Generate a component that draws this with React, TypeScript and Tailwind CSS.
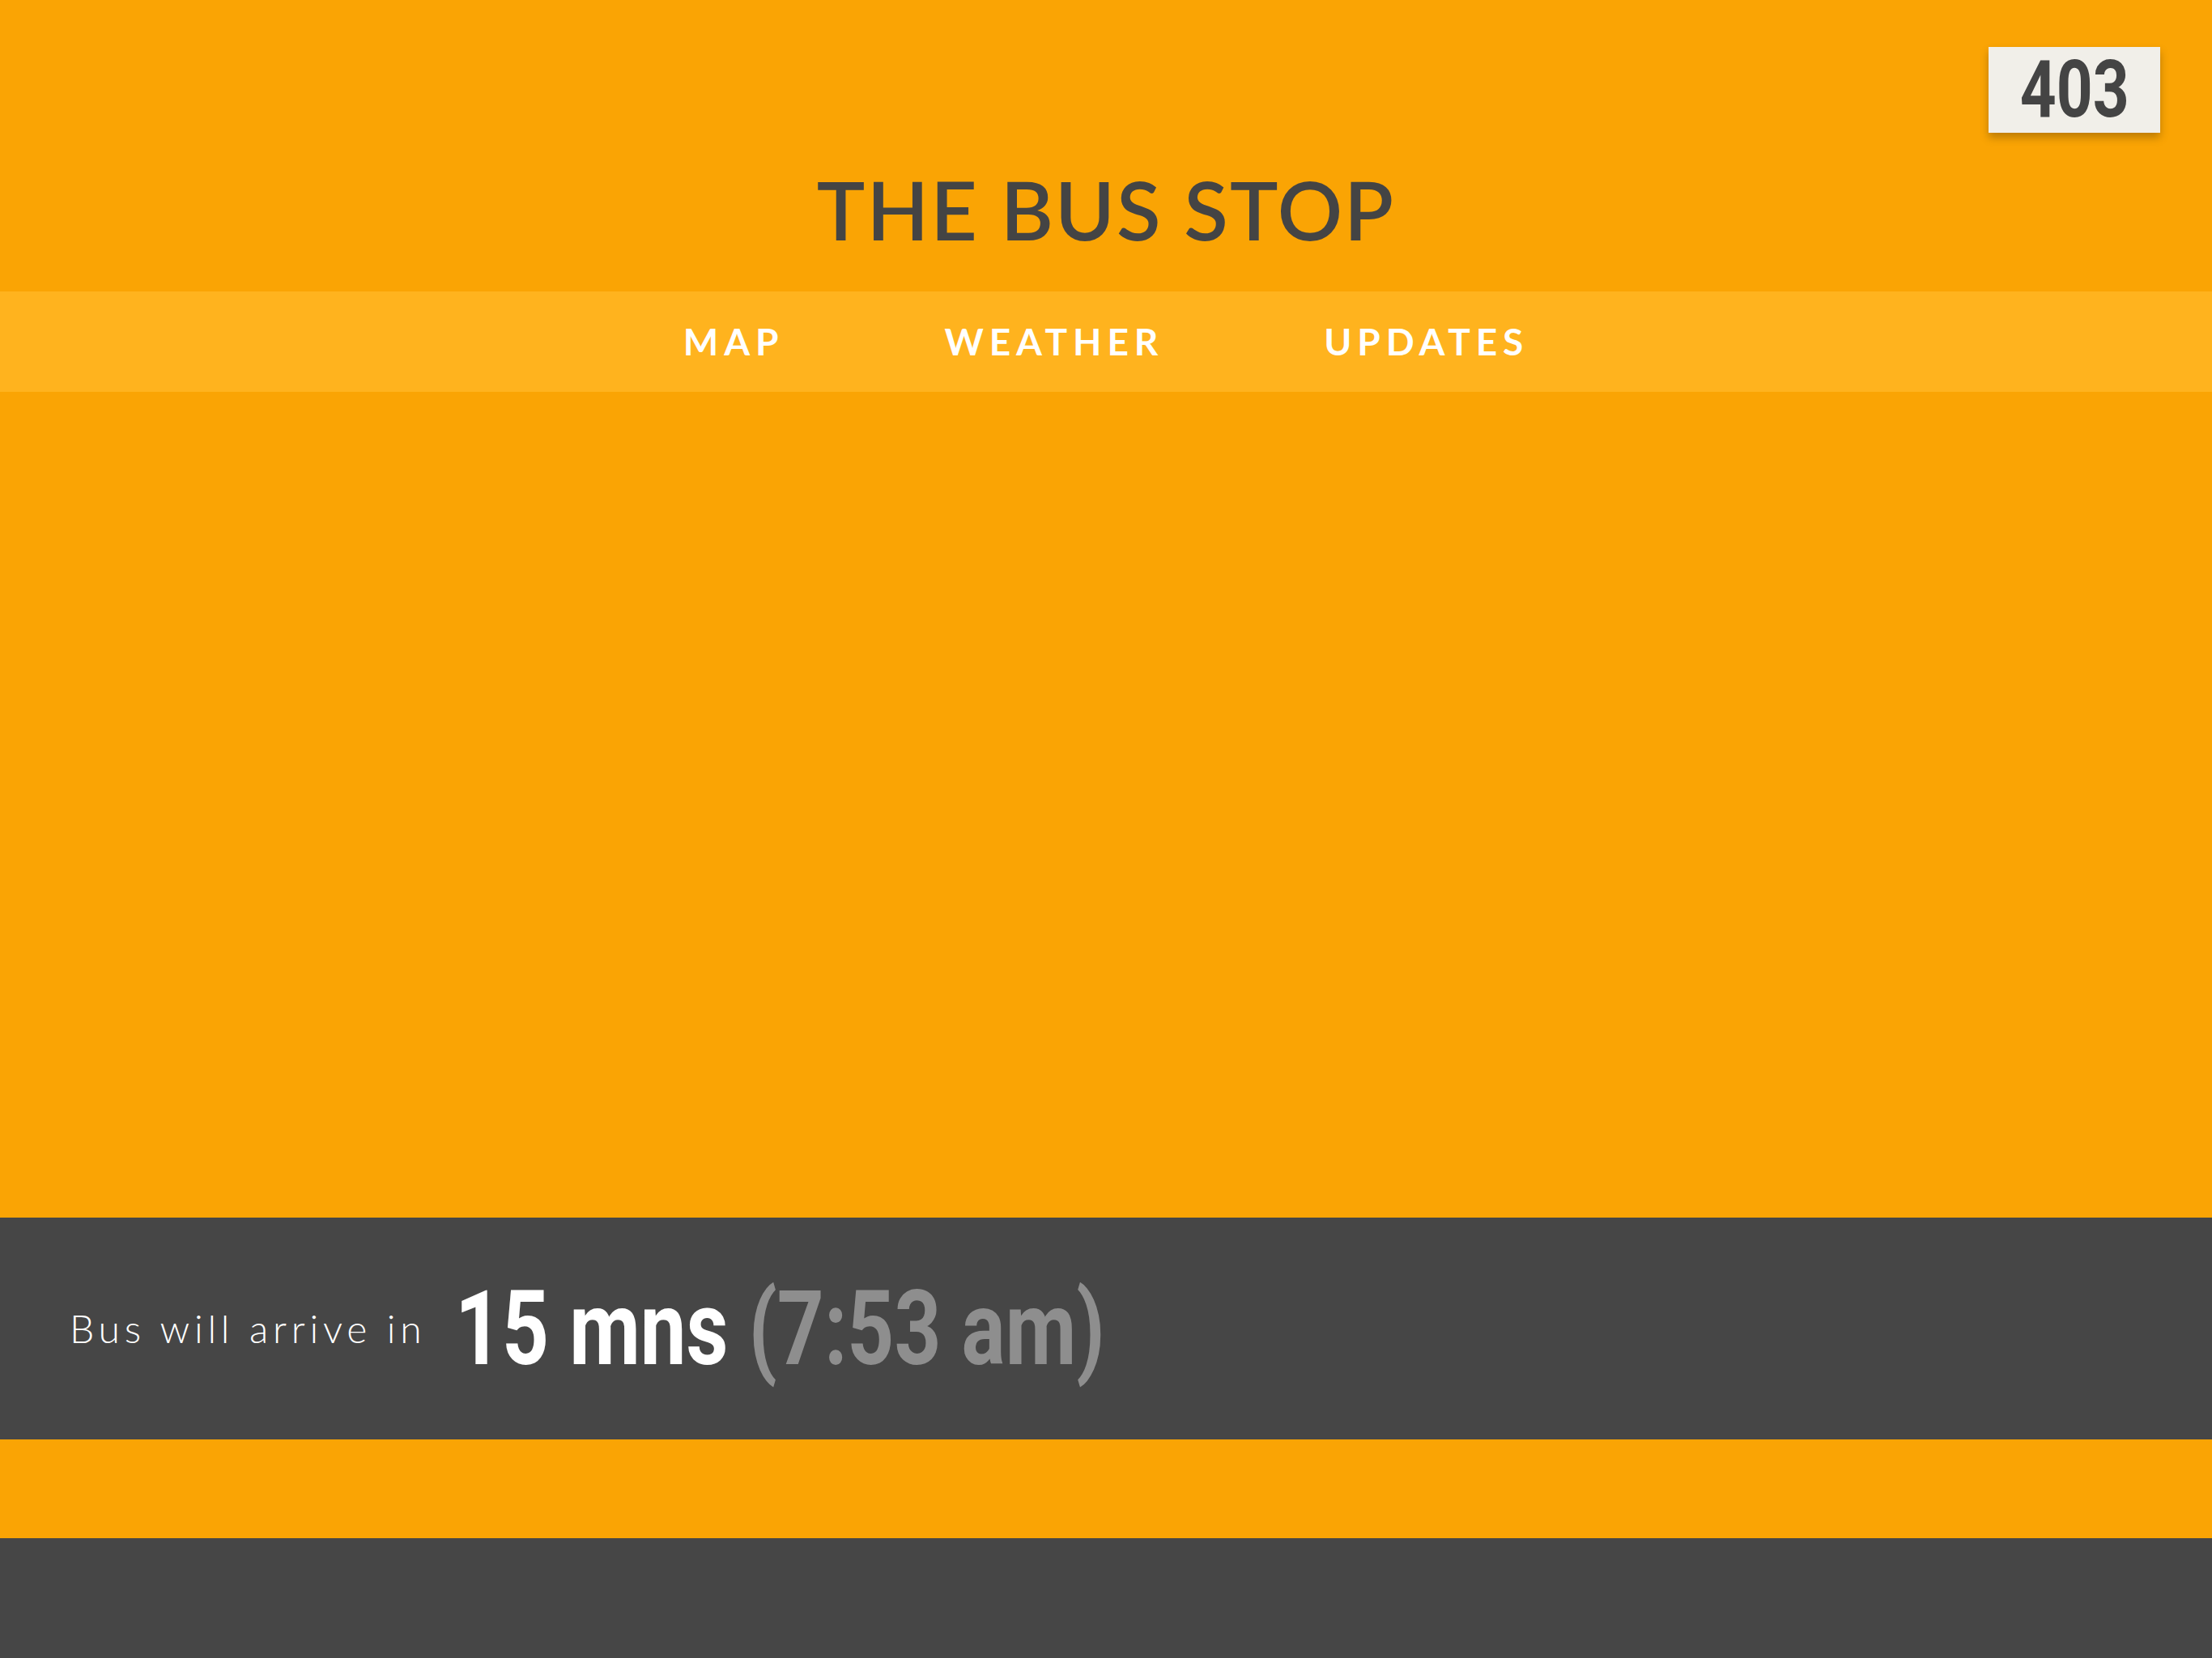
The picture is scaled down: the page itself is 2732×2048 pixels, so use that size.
import React from "react";

const navItems = ["MAP", "WEATHER", "UPDATES"];

export default function App() {
  return (
    <div className="w-[2732px] h-[2048px] bg-[#faa404] flex flex-col overflow-hidden font-['Lato','Noto_Sans',sans-serif]">
      {/* HEADER */}
      <header className="relative h-[360px] flex justify-center">
        <h1 className="pt-[194px] text-[100px] leading-[128px] tracking-[0.02em] font-semibold text-[#444444]">
          THE BUS STOP
        </h1>
        <div className="absolute top-[58px] right-[64px] w-[212px] h-[106px] bg-[#f1efe9] shadow-[0_6px_10px_rgba(0,0,0,0.25)] flex items-center justify-center">
          <span className="inline-block scale-x-[0.8] font-['Roboto',sans-serif] font-bold text-[98px] leading-none text-[#444444]">
            403
          </span>
        </div>
      </header>

      {/* NAV */}
      <nav className="h-[124px] bg-[#ffb31e] flex items-center justify-center">
        <ul className="flex gap-[198px]">
          {navItems.map((item) => (
            <li key={item} className="text-[46px] leading-none tracking-[0.15em] font-bold text-white">
              {item}
            </li>
          ))}
        </ul>
      </nav>

      {/* MAP AREA */}
      <main className="flex-1" />

      {/* ARRIVAL */}
      <section className="h-[274px] bg-[#464646] flex items-center pl-[86px]">
        <span className="text-[48px] font-light tracking-[0.12em] text-white mr-[36px]">Bus will arrive in</span>
        <div className="w-[796px] h-[160px] flex items-center">
          <span className="inline-block origin-left scale-x-[0.79] whitespace-nowrap font-['Roboto',sans-serif] font-bold text-[128px] leading-none">
            <span className="text-white">15 mns</span>{" "}
            <span className="text-[#8e8e8e]">(7:53 am)</span>
          </span>
        </div>
      </section>

      <div className="h-[122px]" />
      <footer className="h-[148px] bg-[#464646]" />
    </div>
  );
}
